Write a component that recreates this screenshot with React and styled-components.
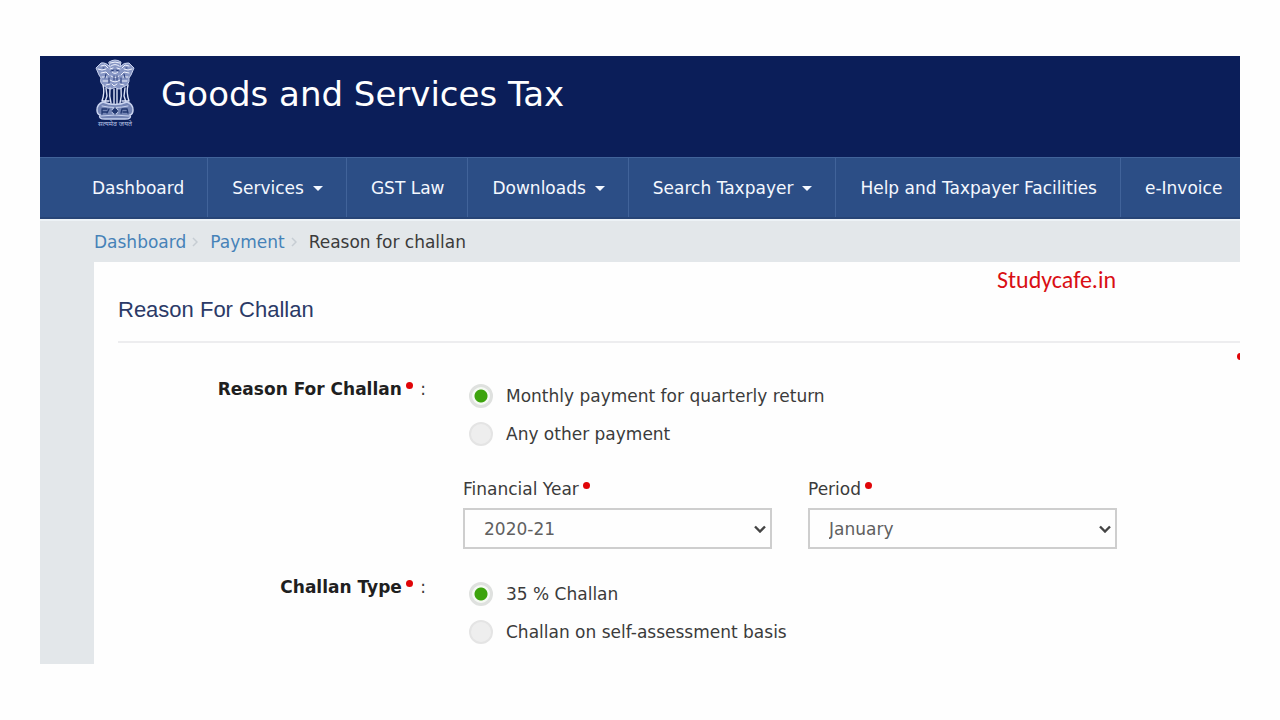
import React from "react";
import styled, { createGlobalStyle, css } from "styled-components";

const GlobalStyle = createGlobalStyle`
  *, *::before, *::after { box-sizing: border-box; }
  body {
    margin: 0;
    background: #fefefe;
    color: #3b3b3b;
    font: 17px/24px Verdana, "DejaVu Sans", sans-serif;
  }
  #root { overflow-x: hidden; }
`;

const Page = styled.div`
  position: relative;
  margin: 56px 40px;
  overflow: hidden;
  background: #e3e7ea;
`;

const Header = styled.header`
  display: flex;
  align-items: flex-start;
  gap: 25px;
  height: 101px;
  padding: 2px 54px 0;
  background: #0b1e59;
`;

const Brand = styled.h1`
  margin: 14px 0 0;
  color: #fff;
  font-size: 34px;
  font-weight: 400;
  line-height: 44px;
  white-space: nowrap;
`;

const EmblemSvg = styled.svg`
  flex: none;
  width: 42px;
  height: 72px;
`;

const NavBar = styled.nav`
  border-top: 1px solid #41639a;
  border-bottom: 2px solid #274476;
  background: #2c4e86;
`;

const NavList = styled.ul`
  display: flex;
  margin: 0;
  padding: 0 0 0 28px;
  list-style: none;
`;

const NavItem = styled.li`
  flex: none;
  & + & { border-left: 1px solid #41639a; }
`;

const navControl = css`
  display: flex;
  align-items: center;
  gap: 9px;
  height: 59px;
  padding: 1px 23px 0 24px;
  border: 0;
  background: none;
  color: #f4f8ff;
  font: inherit;
  text-decoration: none;
  white-space: nowrap;
`;

const NavLink = styled.a`${navControl}`;
const NavButton = styled.button`${navControl}`;

const Caret = styled.span`
  border: 5px solid transparent;
  border-top-color: #f4f8ff;
  border-bottom: 0;
`;

const Crumbs = styled.ol`
  display: flex;
  align-items: center;
  height: 43px;
  margin: 0;
  padding: 0 54px;
  border-top: 2px solid #edf2f6;
  list-style: none;
`;

const Crumb = styled.li`
  display: flex;
  align-items: center;
`;

const CrumbLink = styled.a`
  color: #4682b8;
  text-decoration: none;
`;

const CrumbArrow = styled.svg`
  width: 6px;
  height: 10px;
  margin: 0 12px 0 6px;
`;

const Card = styled.main`
  margin-left: 54px;
  padding: 32px 0 13px 24px;
  background: #fefefe;
`;

const Title = styled.h2`
  margin: 0;
  padding-bottom: 15px;
  border-bottom: 2px solid #ededef;
  color: #2b3a67;
  font: 400 22px/32px Arial, "Liberation Sans", sans-serif;
`;

const Note = styled.div`
  display: flex;
  justify-content: flex-end;
  height: 34px;
  margin-right: -6px;
  padding-top: 10px;
`;

const Dot = styled.span`
  display: inline-block;
  flex: none;
  width: 7px;
  height: 7px;
  margin: 0 2px 0 4px;
  border-radius: 50%;
  background: #e00508;
  vertical-align: 6px;
`;

const Row = styled.div`
  display: grid;
  grid-template-columns: minmax(0, 308px) minmax(0, 1fr);
  column-gap: 37px;
  & + & { margin-top: 26px; }
`;

const RowLabel = styled.div`
  text-align: right;
`;

const Strong = styled.strong`
  color: #1f1f1f;
`;

const Option = styled.label`
  display: flex;
  align-items: center;
  gap: 13px;
  height: 38px;
  padding-left: 6px;
`;

const Radio = styled.input`
  flex: none;
  width: 24px;
  height: 24px;
  margin: 0;
  appearance: none;
  border: 2px solid #e4e4e4;
  border-radius: 50%;
  background: #eee;
  &:checked {
    border: 3px solid #dfe1df;
    background: radial-gradient(circle, #3ca30c 6px, #f6faf4 7px);
  }
`;

const Fields = styled.div`
  display: flex;
  gap: 36px;
  margin-top: 24px;
`;

const Field = styled.div`
  display: flex;
  flex-direction: column;
  gap: 7px;
  flex: 0 1 309px;
`;

const SelectBox = styled.div`
  display: grid;
  align-items: center;
  & > * { grid-area: 1 / 1; }
`;

const Select = styled.select`
  width: 100%;
  height: 41px;
  padding: 0 40px 0 19px;
  appearance: none;
  border: 2px solid #cecece;
  border-radius: 0;
  background: #fefefe;
  color: #606060;
  font: inherit;
`;

const Chevron = styled.svg`
  justify-self: end;
  width: 12px;
  height: 8px;
  margin-right: 6px;
  pointer-events: none;
`;

const Watermark = styled.p`
  position: absolute;
  top: 210px;
  right: 124px;
  margin: 0;
  color: #d90f14;
  font: 24px/28px Calibri, Carlito, "Open Sans", sans-serif;
`;

function Emblem() {
  return (
    <EmblemSvg viewBox="0 0 42 72" role="img" aria-label="Emblem of India" fill="none" stroke="#c8d2ee" strokeLinecap="round">
      <path d="M15 4Q21 0 27 4L26 9Q30 4 35 5L40 10L37 17L35 20Q36 27 29 29Q25 33 21 29Q16 33 12 29Q5 26 7 20L5 17L2 10L7 5Q12 4 16 9Z" fill="#8796c4" strokeWidth="1" />
      <path d="M16 5Q21 3 26 5M17 8Q21 5 25 8M16 11L19 10M23 10L26 11M18 14Q21 17 24 14M17 18Q21 21 25 18M16 22Q21 26 26 22M18 26L20 28L23 26M7 8L11 7L14 10M4 11L8 12L12 11M7 15L12 14L15 17M8 19L13 19M9 23L14 23M12 27L16 26M35 8L31 7L28 10M38 11L34 12L30 11M35 15L30 14L27 17M34 19L29 19M33 23L28 23M30 27L26 26" stroke="#f1f4ff" strokeWidth="1" />
      <path d="M17 13L20 12M22 12L25 13M9 10L10 10M32 10L33 10M20 18L20 22M23 18L23 22M12 16L11 20M30 16L31 20M15 20L15 25M27 20L27 25" stroke="#263b79" strokeWidth="1" />
      <path d="M9 27Q11 34 8 43M12 30L13 38L11 44M16 30Q15 38 17 45M20 31L20 46M23 31L23 46M27 30Q28 38 26 45M31 30L30 38L32 44M34 27Q32 34 35 43M9 43L15 43M28 43L34 43" stroke="#dbe2f7" strokeWidth="1.4" />
      <path d="M9 44Q3 46 3 52Q3 56 6 57Q4 61 11 61H31Q38 61 36 57Q39 56 39 52Q39 46 33 44Q21 49 9 44Z" fill="#7384b4" strokeWidth="1.5" />
      <path d="M8 48Q21 51 34 48M7 58Q21 56 35 58" strokeWidth="1" />
      <circle cx="21" cy="53" r="3.2" fill="#20366f" strokeWidth="1" />
      <path d="M21 50V56M18 53H24M8 51H13M9 54H13M8 56V52M15 51L13 55M28 51H33L34 55M28 51L27 55M29 54H33" stroke="#20366f" strokeWidth="1.3" />
      <text x="21" y="68" textAnchor="middle" fill="#b5c1e2" stroke="none" fontSize="7" fontFamily="Noto Sans, sans-serif">सत्यमेव जयते</text>
    </EmblemSvg>
  );
}

const navItems = [
  { label: "Dashboard" },
  { label: "Services", menu: true },
  { label: "GST Law" },
  { label: "Downloads", menu: true },
  { label: "Search Taxpayer", menu: true },
  { label: "Help and Taxpayer Facilities" },
  { label: "e-Invoice" },
];

function Separator() {
  return (
    <CrumbArrow viewBox="0 0 6 10" aria-hidden="true">
      <path d="M1 1L5 5L1 9" fill="none" stroke="#c6cdd3" strokeWidth="1.5" />
    </CrumbArrow>
  );
}

function RadioOptions({ name, options }) {
  return options.map((text, i) => (
    <Option key={text}>
      <Radio type="radio" name={name} defaultChecked={i === 0} />
      <span>{text}</span>
    </Option>
  ));
}

function SelectField({ id, label, value }) {
  return (
    <Field>
      <label htmlFor={id}>{label}<Dot /></label>
      <SelectBox>
        <Select id={id} defaultValue={value} required>
          <option>{value}</option>
        </Select>
        <Chevron viewBox="0 0 12 8" aria-hidden="true">
          <path d="M1 1.5L6 6.5L11 1.5" fill="none" stroke="#444" strokeWidth="2.4" />
        </Chevron>
      </SelectBox>
    </Field>
  );
}

export default function App() {
  return (
    <>
      <GlobalStyle />
      <Page>
        <Header>
          <Emblem />
          <Brand>Goods and Services Tax</Brand>
        </Header>
        <NavBar>
          <NavList>
            {navItems.map(({ label, menu }) => (
              <NavItem key={label}>
                {menu ? (
                  <NavButton type="button">{label}<Caret /></NavButton>
                ) : (
                  <NavLink href="#">{label}</NavLink>
                )}
              </NavItem>
            ))}
          </NavList>
        </NavBar>
        <Crumbs>
          <Crumb><CrumbLink href="#">Dashboard</CrumbLink><Separator /></Crumb>
          <Crumb><CrumbLink href="#">Payment</CrumbLink><Separator /></Crumb>
          <Crumb>Reason for challan</Crumb>
        </Crumbs>
        <Card>
          <Title>Reason For Challan</Title>
          <Note><Dot /></Note>
          <Row role="radiogroup" aria-labelledby="reason-label">
            <RowLabel id="reason-label"><Strong>Reason For Challan</Strong><Dot /> :</RowLabel>
            <div>
              <RadioOptions name="reason" options={["Monthly payment for quarterly return", "Any other payment"]} />
              <Fields>
                <SelectField id="year" label="Financial Year" value="2020-21" />
                <SelectField id="period" label="Period" value="January" />
              </Fields>
            </div>
          </Row>
          <Row role="radiogroup" aria-labelledby="type-label">
            <RowLabel id="type-label"><Strong>Challan Type</Strong><Dot /> :</RowLabel>
            <div>
              <RadioOptions name="type" options={["35 % Challan", "Challan on self-assessment basis"]} />
            </div>
          </Row>
        </Card>
        <Watermark>Studycafe.in</Watermark>
      </Page>
    </>
  );
}
